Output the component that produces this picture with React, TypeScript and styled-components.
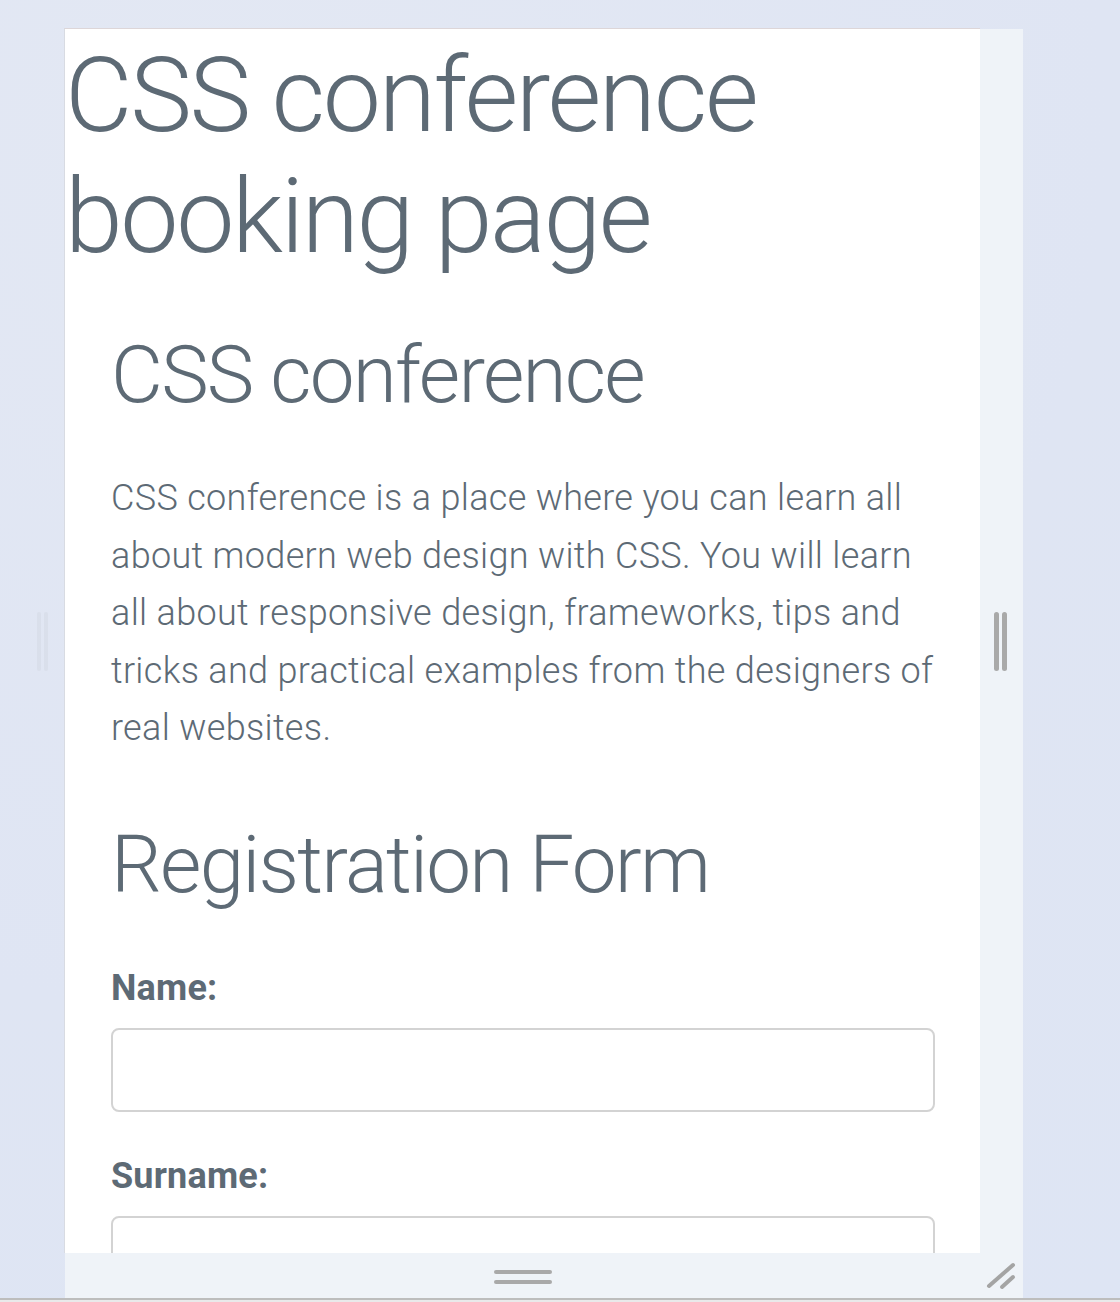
import React from "react";
import styled, { createGlobalStyle } from "styled-components";

const Global = createGlobalStyle`
  html, body { margin: 0; padding: 0; }
  body {
    background: #e9e9ea;
    font-family: Roboto, "Liberation Sans", sans-serif;
    overflow: hidden;
  }
  * { box-sizing: border-box; }
`;

const Stage = styled.div`
  height: 1298px;
  display: grid;
  grid-template-columns: 65px 958px 1fr;
  grid-template-rows: 29px 1269px;
  background: radial-gradient(circle at 20% 10%, #e3e8f3 0%, #dfe5f3 60%, #dee5f4 100%);
  border-bottom: 2px solid #bdbdbd;
  box-sizing: content-box;
`;

const Gutter = styled.div`
  grid-row: 2;
  grid-column: 1;
  display: flex;
  justify-content: flex-end;
  padding-right: 17px;
  padding-top: 583px;
`;

const FaintHandle = styled.div`
  display: flex;
  gap: 3px;
  height: 59px;
  opacity: 0.06;
  & > span {
    width: 4px;
    border-radius: 2px;
    background: #7a7a7a;
  }
`;

const Frame = styled.div`
  grid-row: 2;
  grid-column: 2;
  display: grid;
  grid-template-columns: 915px 43px;
  grid-template-rows: 1224px 45px;
  background: #eff3f8;
`;

const Viewport = styled.div`
  grid-row: 1;
  grid-column: 1;
  background: #ffffff;
  overflow: hidden;
  border-top: 1px solid #ddd6d8;
  border-left: 1px solid #d8dbe2;
  margin-top: -1px;
  margin-left: -1px;
  color: #5d6a75;
`;

const SideStrip = styled.div`
  grid-row: 1;
  grid-column: 2;
  display: flex;
  align-items: center;
  justify-content: center;
  padding-right: 2px;
`;

const VHandle = styled.div`
  display: flex;
  gap: 3px;
  height: 59px;
  & > span {
    width: 5px;
    border-radius: 3px;
    background: #a9a9a9;
  }
`;

const BottomStrip = styled.div`
  grid-row: 2;
  grid-column: 1;
  display: flex;
  align-items: center;
  justify-content: center;
  padding-left: 1px;
  padding-top: 2px;
`;

const HHandle = styled.div`
  display: flex;
  flex-direction: column;
  gap: 6px;
  width: 58px;
  & > span {
    height: 4px;
    border-radius: 2px;
    background: #a9a9a9;
  }
`;

const Corner = styled.div`
  grid-row: 2;
  grid-column: 2;
  display: flex;
  align-items: flex-end;
  justify-content: flex-start;
  padding: 0 0 8px 6px;
`;

const PageTitle = styled.h1`
  margin: 0;
  padding-top: 6px;
  font-size: 104px;
  font-weight: 300;
  line-height: 121px;
  letter-spacing: -0.023em;
`;

const Section = styled.section`
  padding: 0 45px 0 46px;
`;

const SubTitle = styled.h2`
  margin: 51px 0 0;
  font-size: 80px;
  font-weight: 300;
  line-height: 94px;
  letter-spacing: -0.022em;
`;

const Text = styled.p`
  margin: 48px 0 0;
  font-size: 36px;
  font-weight: 300;
  line-height: 57.6px;
  letter-spacing: 0.33px;
`;

const FormTitle = styled.h2`
  margin: 60px 0 0;
  font-size: 80px;
  font-weight: 300;
  line-height: 94px;
  letter-spacing: -0.022em;
`;

const Form = styled.form`
  margin-top: 55px;
  display: flex;
  flex-direction: column;
`;

const Label = styled.label`
  display: block;
  font-size: 36px;
  font-weight: 700;
  line-height: 42px;
  letter-spacing: 0.2px;
  color: #5d6a75;
`;

const Input = styled.input`
  display: block;
  width: 100%;
  height: 84px;
  margin: 19px 0 43px;
  border: 2px solid #d3d3d3;
  border-radius: 8px;
  background: #fff;
  font-size: 28px;
  font-family: inherit;
  padding: 0 16px;
  outline: none;
`;

export default function App() {
  return (
    <>
      <Global />
      <Stage>
        <Gutter>
          <FaintHandle>
            <span />
            <span />
          </FaintHandle>
        </Gutter>
        <Frame>
          <Viewport>
            <PageTitle>CSS conference booking page</PageTitle>
            <Section>
              <SubTitle>CSS conference</SubTitle>
              <Text>
                CSS conference is a place where you can learn all about modern web design with CSS.
                You will learn all about responsive design, frameworks, tips and tricks and practical
                examples from the designers of real websites.
              </Text>
              <FormTitle>Registration Form</FormTitle>
              <Form>
                <Label htmlFor="name">Name:</Label>
                <Input id="name" type="text" />
                <Label htmlFor="surname">Surname:</Label>
                <Input id="surname" type="text" />
              </Form>
            </Section>
          </Viewport>
          <SideStrip>
            <VHandle>
              <span />
              <span />
            </VHandle>
          </SideStrip>
          <BottomStrip>
            <HHandle>
              <span />
              <span />
            </HHandle>
          </BottomStrip>
          <Corner>
            <svg width="32" height="30" viewBox="0 0 32 30" aria-hidden="true">
              <line x1="3" y1="26" x2="27" y2="5" stroke="#a4a4a4" strokeWidth="4" strokeLinecap="round" />
              <line x1="16" y1="27" x2="27" y2="17" stroke="#a4a4a4" strokeWidth="4" strokeLinecap="round" />
            </svg>
          </Corner>
        </Frame>
      </Stage>
    </>
  );
}
